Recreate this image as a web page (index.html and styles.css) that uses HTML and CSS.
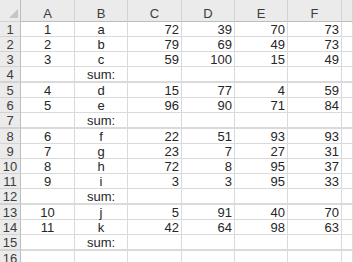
FILE: index.html
```html
<!DOCTYPE html>
<html>
<head>
<meta charset="utf-8">
<link rel="stylesheet" href="styles.css">
</head>
<body>
<div class="sheet">
  <div class="row head">
    <div class="rh corner"><svg class="tri" width="9" height="9" viewBox="0 0 9 9"><polygon points="9,0 9,9 0,9" fill="#c6c6c6"/></svg></div>
    <div class="c w54 ch">A</div><div class="c w53 ch">B</div><div class="c w54 ch">C</div><div class="c w53 ch">D</div><div class="c w53 ch">E</div><div class="c w54 ch">F</div><div class="c rest ch"></div>
  </div>
  <div class="row"><div class="rh">1</div><div class="c w54 ctr">1</div><div class="c w53 ctr">a</div><div class="c w54 num">72</div><div class="c w53 num">39</div><div class="c w53 num">70</div><div class="c w54 num">73</div><div class="c rest"></div></div>
  <div class="row"><div class="rh">2</div><div class="c w54 ctr">2</div><div class="c w53 ctr">b</div><div class="c w54 num">79</div><div class="c w53 num">69</div><div class="c w53 num">49</div><div class="c w54 num">73</div><div class="c rest"></div></div>
  <div class="row"><div class="rh">3</div><div class="c w54 ctr">3</div><div class="c w53 ctr">c</div><div class="c w54 num">59</div><div class="c w53 num">100</div><div class="c w53 num">15</div><div class="c w54 num">49</div><div class="c rest"></div></div>
  <div class="row sum"><div class="rh">4</div><div class="c w54 ctr"></div><div class="c w53 ctr">sum:</div><div class="c w54 num"></div><div class="c w53 num"></div><div class="c w53 num"></div><div class="c w54 num"></div><div class="c rest"></div></div>
  <div class="row"><div class="rh">5</div><div class="c w54 ctr">4</div><div class="c w53 ctr">d</div><div class="c w54 num">15</div><div class="c w53 num">77</div><div class="c w53 num">4</div><div class="c w54 num">59</div><div class="c rest"></div></div>
  <div class="row"><div class="rh">6</div><div class="c w54 ctr">5</div><div class="c w53 ctr">e</div><div class="c w54 num">96</div><div class="c w53 num">90</div><div class="c w53 num">71</div><div class="c w54 num">84</div><div class="c rest"></div></div>
  <div class="row sum"><div class="rh">7</div><div class="c w54 ctr"></div><div class="c w53 ctr">sum:</div><div class="c w54 num"></div><div class="c w53 num"></div><div class="c w53 num"></div><div class="c w54 num"></div><div class="c rest"></div></div>
  <div class="row"><div class="rh">8</div><div class="c w54 ctr">6</div><div class="c w53 ctr">f</div><div class="c w54 num">22</div><div class="c w53 num">51</div><div class="c w53 num">93</div><div class="c w54 num">93</div><div class="c rest"></div></div>
  <div class="row"><div class="rh">9</div><div class="c w54 ctr">7</div><div class="c w53 ctr">g</div><div class="c w54 num">23</div><div class="c w53 num">7</div><div class="c w53 num">27</div><div class="c w54 num">31</div><div class="c rest"></div></div>
  <div class="row"><div class="rh">10</div><div class="c w54 ctr">8</div><div class="c w53 ctr">h</div><div class="c w54 num">72</div><div class="c w53 num">8</div><div class="c w53 num">95</div><div class="c w54 num">37</div><div class="c rest"></div></div>
  <div class="row"><div class="rh">11</div><div class="c w54 ctr">9</div><div class="c w53 ctr">i</div><div class="c w54 num">3</div><div class="c w53 num">3</div><div class="c w53 num">95</div><div class="c w54 num">33</div><div class="c rest"></div></div>
  <div class="row sum"><div class="rh">12</div><div class="c w54 ctr"></div><div class="c w53 ctr">sum:</div><div class="c w54 num"></div><div class="c w53 num"></div><div class="c w53 num"></div><div class="c w54 num"></div><div class="c rest"></div></div>
  <div class="row"><div class="rh">13</div><div class="c w54 ctr">10</div><div class="c w53 ctr">j</div><div class="c w54 num">5</div><div class="c w53 num">91</div><div class="c w53 num">40</div><div class="c w54 num">70</div><div class="c rest"></div></div>
  <div class="row"><div class="rh">14</div><div class="c w54 ctr">11</div><div class="c w53 ctr">k</div><div class="c w54 num">42</div><div class="c w53 num">64</div><div class="c w53 num">98</div><div class="c w54 num">63</div><div class="c rest"></div></div>
  <div class="row sum"><div class="rh">15</div><div class="c w54 ctr"></div><div class="c w53 ctr">sum:</div><div class="c w54 num"></div><div class="c w53 num"></div><div class="c w53 num"></div><div class="c w54 num"></div><div class="c rest"></div></div>
  <div class="row"><div class="rh">16</div><div class="c w54 ctr"></div><div class="c w53 ctr"></div><div class="c w54 num"></div><div class="c w53 num"></div><div class="c w53 num"></div><div class="c w54 num"></div><div class="c rest"></div></div>
</div>
</body>
</html>
```
FILE: styles.css
```css
html, body {
  margin: 0;
  padding: 0;
  background: #ffffff;
}
.sheet {
  width: 353px;
  height: 262px;
  overflow: hidden;
  font-family: "Liberation Sans", Arial, sans-serif;
  font-size: 13px;
  color: #262626;
}
.row {
  display: flex;
}
.row > div {
  box-sizing: border-box;
  height: 15px;
  line-height: 12px;
  display: flex;
  align-items: flex-end;
  border-bottom: 1px solid #dadada;
  border-right: 1px solid #dadada;
  flex-shrink: 0;
  white-space: nowrap;
}
.row.sum > div {
  height: 16px;
  border-bottom-width: 2px;
}
.rh {
  width: 21px;
  justify-content: center;
  background: #ebebeb;
  color: #3c3c3c;
  border-right-color: #bdbdbd !important;
  border-bottom-color: #d3d3d3 !important;
}
.head > div {
  height: 22px;
  background: #ebebeb;
  color: #3c3c3c;
  border-bottom-color: #bdbdbd;
  border-right-color: #d3d3d3;
  line-height: 13px;
  padding-bottom: 1px;
}
.corner {
  position: relative;
}
.tri {
  position: absolute;
  right: 2px;
  bottom: 3px;
}
.w54 { width: 54px; }
.w53 { width: 53px; }
.rest { flex: 1 0 auto; width: 11px; }
.ch, .ctr { justify-content: center; }
.num { justify-content: flex-end; padding-right: 2px; }
```
